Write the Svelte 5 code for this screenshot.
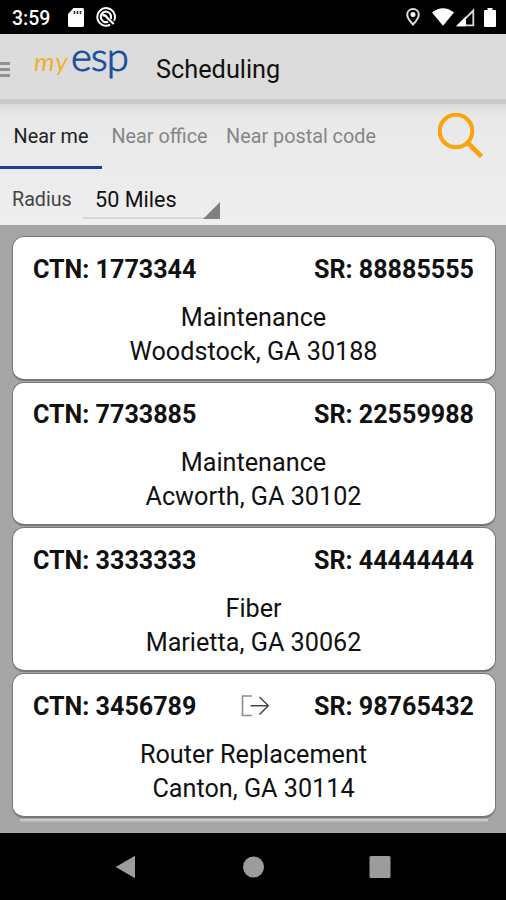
<script>
  const tabs = ["Near me", "Near office", "Near postal code"];
  let active = $state(0);

  const jobs = [
    { ctn: "1773344", sr: "88885555", type: "Maintenance", place: "Woodstock, GA 30188" },
    { ctn: "7733885", sr: "22559988", type: "Maintenance", place: "Acworth, GA 30102" },
    { ctn: "3333333", sr: "44444444", type: "Fiber", place: "Marietta, GA 30062" },
    { ctn: "3456789", sr: "98765432", type: "Router Replacement", place: "Canton, GA 30114", forwarded: true }
  ];
</script>

<div class="screen">
  <div class="status">
    <span class="time">3:59</span>
    <svg class="sd" width="16" height="19" viewBox="0 0 16 19">
      <path d="M5.5 0H14.5Q16 0 16 1.5V17.5Q16 19 14.5 19H1.5Q0 19 0 17.5V6Z" fill="#fff" />
      <path d="M6.5 3v3M9.5 3v3M12.5 3v3" stroke="#333" stroke-width="1.6" />
    </svg>
    <svg class="sync" width="20" height="20" viewBox="0 0 20 20">
      <g fill="none" stroke="#fff">
        <path d="M14.200 17.700A8.800 8.800 0 1 1 18 13.800" stroke-width="2" />
        <path d="M12 14.700A5.200 5.200 0 1 1 14.800 11.800" stroke-width="2.200" />
        <path d="M6.500 8.500Q9.500 7.500 11 10.500L17.800 17" stroke-width="2.400" />
      </g>
    </svg>
    <span class="fill"></span>
    <svg class="pin" width="14" height="18" viewBox="0 0 14 18">
      <path d="M7 1C3.600 1 1.200 3.500 1.200 6.500C1.200 10.500 7 16.500 7 16.500S12.800 10.500 12.800 6.500C12.800 3.500 10.400 1 7 1Z" fill="none" stroke="#ddd" stroke-width="2" />
      <circle cx="7" cy="6.500" r="2.500" fill="#fff" />
    </svg>
    <svg class="wifi" width="22" height="18" viewBox="0 0 22 18">
      <path d="M0 4.500Q11 -4 22 4.500L11 17.700Z" fill="#fff" />
    </svg>
    <svg class="signal" width="19" height="19" viewBox="0 0 19 19">
      <path d="M17.300 2.500V17.300H2.500Z" fill="none" stroke="#ddd" stroke-width="1.800" />
      <path d="M0 18.200L10 8.200V18.200Z" fill="#fff" />
    </svg>
    <svg class="battery" width="12" height="19" viewBox="0 0 12 19">
      <path d="M3.500 0H8.500V2H11Q12 2 12 3V18Q12 19 11 19H1Q0 19 0 18V3Q0 2 1 2H3.500Z" fill="#fff" />
    </svg>
  </div>

  <header>
    <div class="menu"><i></i><i></i><i></i></div>
    <div class="logo"><span class="my">my</span><span class="esp">esp</span></div>
    <h1>Scheduling</h1>
  </header>

  <div class="filters">
    <div class="tabs">
      {#each tabs as tab, i}
        <button class="tab" class:active={active === i} onclick={() => (active = i)}>{tab}</button>
      {/each}
      <svg class="search" width="46" height="46" viewBox="0 0 46 46">
        <circle cx="18" cy="18" r="16.300" fill="none" stroke="#fba30f" stroke-width="4" />
        <path d="M30 30L43.500 43.500" stroke="#fba30f" stroke-width="4.600" />
      </svg>
    </div>
    <div class="radius">
      <span class="label">Radius</span>
      <div class="select">
        <span>50 Miles</span>
        <svg width="17" height="17" viewBox="0 0 17 17"><path d="M17 0V17H0Z" fill="#808080" /></svg>
      </div>
    </div>
  </div>

  <main>
    {#each jobs as job}
      <section class="card">
        <div class="ids">
          <span>CTN: {job.ctn}</span>
          {#if job.forwarded}
            <svg width="29" height="22" viewBox="0 0 29 22">
              <path d="M11 1H1.500V20.500H11" fill="none" stroke="#8b8f92" stroke-width="1.600" />
              <path d="M9.500 10.700H27M18.500 2L27.300 10.700L18.500 19.500" fill="none" stroke="#444a4e" stroke-width="1.500" />
            </svg>
          {/if}
          <span class="sr">SR: {job.sr}</span>
        </div>
        <p>{job.type}</p>
        <p>{job.place}</p>
      </section>
    {/each}
    <div class="edge"></div>
  </main>

  <nav>
    <svg width="21" height="24" viewBox="0 0 21 24"><path d="M20 0.800V23.200L0.700 12Z" fill="#9c9c9c" /></svg>
    <svg width="22" height="22" viewBox="0 0 22 22"><circle cx="11.500" cy="11" r="10.500" fill="#9c9c9c" /></svg>
    <svg width="22" height="22" viewBox="0 0 22 22"><rect x="0.500" width="21" height="22" rx="1.500" fill="#9c9c9c" /></svg>
  </nav>
</div>

<style>
  :global(body) {
    margin: 0;
    background: #000;
  }
  .screen {
    width: 506px;
    height: 900px;
    display: flex;
    flex-direction: column;
    overflow: hidden;
    font-family: Roboto, sans-serif;
    color: #111;
  }
  svg {
    display: block;
    flex-shrink: 0;
  }
  .status {
    height: 34px;
    box-sizing: border-box;
    flex-shrink: 0;
    display: flex;
    align-items: center;
    padding: 0 10px 0 12px;
    background: #000;
    color: #fff;
  }
  .time {
    width: 56px;
    font-size: 19.500px;
    font-weight: 500;
    line-height: 34px;
    padding-top: 3px;
  }
  .sync {
    margin-left: 12px;
  }
  .fill {
    flex: 1;
  }
  .pin {
    margin-right: -2px;
  }
  .wifi {
    margin-left: 14px;
  }
  .signal {
    margin-left: 2px;
  }
  .battery {
    margin-left: 9px;
  }
  header {
    height: 70px;
    box-sizing: border-box;
    flex-shrink: 0;
    display: flex;
    background: #dcdcdc;
    border-bottom: 5px solid #c9c9c9;
  }
  .menu {
    width: 34px;
    padding-top: 28px;
    display: flex;
    flex-direction: column;
    gap: 3px;
  }
  .menu i {
    width: 10px;
    height: 3px;
    background: #929292;
  }
  .logo {
    width: 122px;
    display: flex;
    align-items: baseline;
    white-space: nowrap;
  }
  .my {
    width: 37px;
    font-family: Lato, sans-serif;
    font-style: italic;
    font-size: 26px;
    letter-spacing: 1px;
    color: #eeb035;
  }
  .esp {
    font-family: Lato, sans-serif;
    font-size: 40px;
    font-weight: 300;
    line-height: 45px;
    letter-spacing: -1px;
    color: #184d9e;
    -webkit-text-stroke: 0.900px #184d9e;
  }
  h1 {
    margin: 0;
    font-size: 25.300px;
    font-weight: 400;
    line-height: 72px;
  }
  .filters {
    height: 121px;
    flex-shrink: 0;
    background: linear-gradient(#dcdcdc, #e9e9e9 12px, #eeeeee 100%);
  }
  .tabs {
    height: 65px;
    display: flex;
  }
  .tab {
    height: 65px;
    padding: 4px 0 0;
    background: none;
    border: 0;
    border-bottom: 3px solid transparent;
    font: 400 19.800px/58px Roboto, sans-serif;
    color: #868686;
    white-space: nowrap;
  }
  .tab:nth-child(1) {
    width: 102px;
  }
  .tab:nth-child(2) {
    width: 115px;
  }
  .tab:nth-child(3) {
    width: 168px;
  }
  .tab.active {
    color: #222;
    border-bottom-color: #213f96;
  }
  .search {
    margin: 9px 0 0 53px;
  }
  .radius {
    display: flex;
    height: 50px;
    padding-left: 12px;
  }
  .label {
    width: 71px;
    font-size: 19.700px;
    line-height: 62px;
    color: #444;
  }
  .select {
    width: 137px;
    height: 50px;
    display: flex;
    justify-content: space-between;
    align-items: flex-end;
    border-bottom: 2px solid #d8d8d8;
    box-sizing: border-box;
  }
  .select span {
    margin-left: 12px;
    font-size: 21.600px;
    line-height: 35px;
  }
  .select svg {
    margin-bottom: -2px;
  }
  main {
    flex: 1;
    min-height: 0;
    box-sizing: border-box;
    padding: 11px 10px 0 12px;
    background: #a5a5a5;
    overflow: hidden;
  }
  .card {
    height: 144.700px;
    box-sizing: border-box;
    margin-bottom: 1px;
    padding: 15px 21px 0 20px;
    border: 1px solid #777;
    border-bottom-width: 2px;
    border-radius: 12px;
    background: #fff;
  }
  .edge {
    height: 3px;
    margin: 0 8px;
    background: linear-gradient(#d8d8d8, #b0b0b0);
  }
  .ids {
    display: flex;
    justify-content: space-between;
    align-items: center;
    height: 34px;
    margin-bottom: 14.600px;
    font-size: 25.100px;
    font-weight: 700;
  }
  p {
    margin: 0;
    font-size: 25.200px;
    line-height: 34px;
    text-align: center;
  }
  nav {
    height: 67px;
    flex-shrink: 0;
    box-sizing: border-box;
    display: flex;
    justify-content: space-between;
    align-items: center;
    padding: 0 115px;
    background: #000;
  }
</style>
